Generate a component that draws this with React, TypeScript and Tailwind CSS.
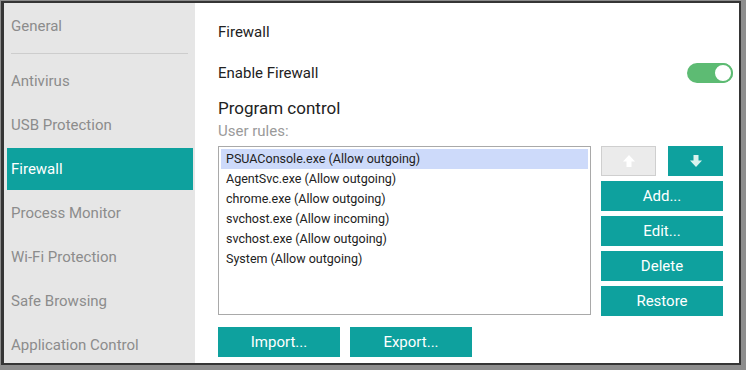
import { useState } from "react";

const TEAL = "bg-[#0ea19e]";

const navItems = [
  "Antivirus",
  "USB Protection",
  "Firewall",
  "Process Monitor",
  "Wi-Fi Protection",
  "Safe Browsing",
  "Application Control",
];

const rules = [
  "PSUAConsole.exe (Allow outgoing)",
  "AgentSvc.exe (Allow outgoing)",
  "chrome.exe (Allow outgoing)",
  "svchost.exe (Allow incoming)",
  "svchost.exe (Allow outgoing)",
  "System (Allow outgoing)",
];

function Arrow({ down, color }: { down?: boolean; color: string }) {
  return (
    <svg width="14" height="14" viewBox="0 0 14 14" className={down ? "rotate-180" : ""}>
      <path d="M7 1 L13 7.5 H9.5 V13 H4.5 V7.5 H1 Z" fill={color} />
    </svg>
  );
}

function SideButton({ label }: { label: string }) {
  return (
    <button className={`h-[30px] w-full ${TEAL} text-white text-[15px] leading-[30px]`}>
      {label}
    </button>
  );
}

export default function App() {
  const [selected, setSelected] = useState(0);
  const [enabled, setEnabled] = useState(true);

  return (
    <div
      className="w-[746px] h-[370px] bg-[#8d8d8d] pl-px pt-px pr-[5px] pb-[5px]"
      style={{ fontFamily: "Roboto, 'Liberation Sans', sans-serif" }}
    >
      <div className="flex h-full border-l-[3px] border-t-[2px] border-r-[2px] border-b-[2px] border-[#353535] bg-white overflow-hidden">
        {/* sidebar */}
        <aside className="w-[191px] shrink-0 bg-[#e6e6e6] pt-px overflow-hidden">
          <div className="h-[44px] flex items-center pl-[7px] text-[15px] text-[#8c8c8c]">General</div>
          <div className="h-[11px] flex items-center px-[7px]">
            <div className="h-px w-[178px] bg-[#cdcdcd]" />
          </div>
          {navItems.map((item) => (
            <div key={item} className="h-[44px] py-px pl-[3px] pr-[2px]">
              <div
                className={
                  item === "Firewall"
                    ? `h-full flex items-center pl-[4px] text-[15px] text-white ${TEAL}`
                    : "h-full flex items-center pl-[4px] text-[15px] text-[#8c8c8c]"
                }
              >
                {item}
              </div>
            </div>
          ))}
        </aside>

        {/* main */}
        <main className="flex-1 pl-[23px] pr-[6px] pt-[20px] text-[#222]">
          <div className="text-[15px] leading-[18px]">Firewall</div>

          <div className="mt-[22px] h-[20px] flex items-center justify-between">
            <span className="text-[15px]">Enable Firewall</span>
            <button
              onClick={() => setEnabled(!enabled)}
              className={`w-[46px] h-[20px] rounded-full flex items-center ${
                enabled ? "bg-[#5dbb73] justify-end" : "bg-[#c8c8c8] justify-start"
              }`}
            >
              <span
                className={`w-[20px] h-[20px] rounded-full bg-white border-2 ${
                  enabled ? "border-[#5dbb73]" : "border-[#c8c8c8]"
                }`}
              />
            </button>
          </div>

          <div className="mt-[15px] text-[17px] leading-[20px]">Program control</div>
          <div className="mt-[4px] text-[15px] leading-[18px] text-[#9a9a9a]">User rules:</div>

          <div className="mt-[6px] flex gap-[10px]">
            <div className="w-[373px] h-[169px] border border-[#a9a9a9] p-[2px]">
              {rules.map((r, i) => (
                <div
                  key={i}
                  onClick={() => setSelected(i)}
                  className={`h-[20px] leading-[19px] pl-[5px] text-[12.5px] ${
                    selected === i ? "bg-[#cddafa]" : ""
                  }`}
                >
                  {r}
                </div>
              ))}
            </div>

            <div className="w-[122px] flex flex-col gap-[5px]">
              <div className="flex justify-between">
                <button className="w-[55px] h-[30px] bg-[#ebebeb] border border-[#cfcfcf] flex items-center justify-center">
                  <Arrow color="#ffffff" />
                </button>
                <button className={`w-[55px] h-[30px] ${TEAL} flex items-center justify-center`}>
                  <Arrow down color="#d9f3ee" />
                </button>
              </div>
              <SideButton label="Add..." />
              <SideButton label="Edit..." />
              <SideButton label="Delete" />
              <SideButton label="Restore" />
            </div>
          </div>

          <div className="mt-[11px] flex gap-[10px]">
            <button className={`w-[122px] h-[30px] ${TEAL} text-white text-[15px]`}>Import...</button>
            <button className={`w-[122px] h-[30px] ${TEAL} text-white text-[15px]`}>Export...</button>
          </div>
        </main>
      </div>
    </div>
  );
}
